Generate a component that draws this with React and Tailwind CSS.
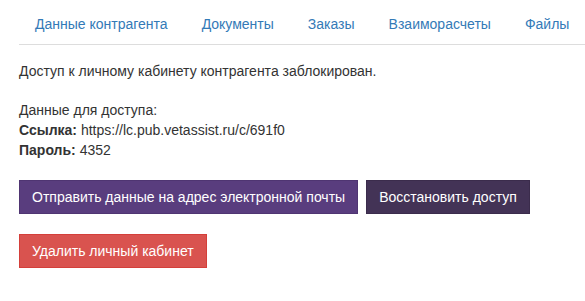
import React from 'react';

const tabs = ['Данные контрагента', 'Документы', 'Заказы', 'Взаиморасчеты', 'Файлы'];

const App = () => {
    return (
        <div className="min-h-[301px] bg-white pl-[19px] pt-[3px] text-[14px] leading-5 text-[#333]" style={{ fontFamily: '"Liberation Sans", Arial, sans-serif' }}>
            <ul className="flex border-b border-[#ddd]">
                {tabs.map(tab => (
                    <li key={tab} className="-mb-px mr-[2px]">
                        <a className="block whitespace-nowrap border border-transparent px-[15px] py-[10px] text-[#337ab7]">{tab}</a>
                    </li>
                ))}
            </ul>

            <div className="pt-[16px]">
                <p>Доступ к личному кабинету контрагента заблокирован.</p>

                <div className="mt-[19px]">
                    <p>Данные для доступа:</p>
                    <p><strong>Ссылка:</strong> https://lc.pub.vetassist.ru/c/691f0</p>
                    <p><strong>Пароль:</strong> 4352</p>
                </div>

                <div className="mt-5 flex gap-2">
                    <button className="border border-[#4f3572] bg-[#593d7e] px-3 py-[6px] leading-5 text-white">
                        Отправить данные на адрес электронной почты
                    </button>
                    <button className="border border-[#3b2c4c] bg-[#433356] px-3 py-[6px] leading-5 text-white">
                        Восстановить доступ
                    </button>
                </div>

                <div className="mt-5">
                    <button className="border border-[#d43f3a] bg-[#d9534f] px-3 py-[6px] leading-5 text-white">
                        Удалить личный кабинет
                    </button>
                </div>
            </div>
        </div>
    );
};

export default App;
